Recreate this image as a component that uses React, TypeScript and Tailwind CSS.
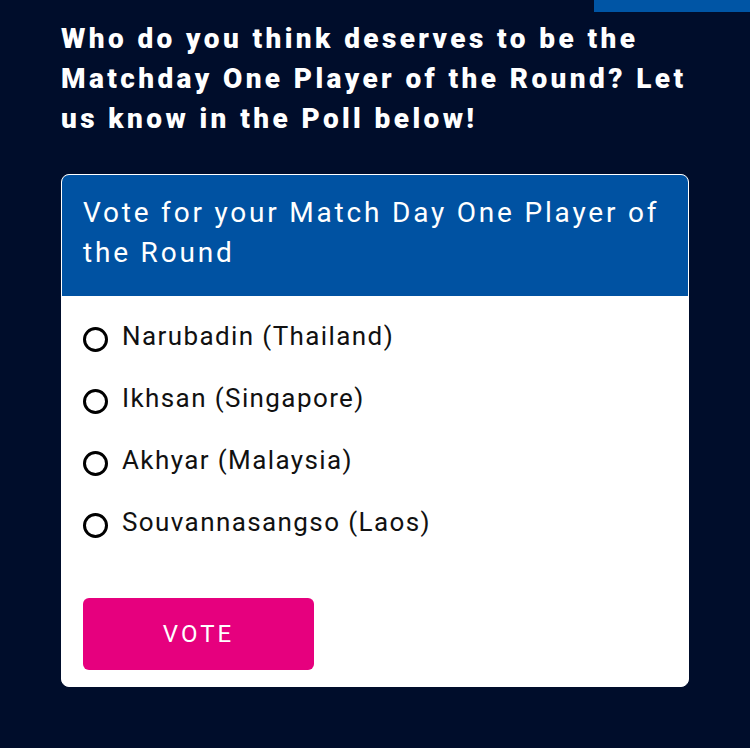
import { useState } from "react";

const options = [
  "Narubadin (Thailand)",
  "Ikhsan (Singapore)",
  "Akhyar (Malaysia)",
  "Souvannasangso (Laos)",
];

export default function App() {
  const [picked, setPicked] = useState<number | null>(null);

  return (
    <div className="min-h-[748px] w-[750px] bg-[#000d2b] font-['Roboto',sans-serif]">
      <div className="flex justify-end">
        <div className="h-3 w-[156px] bg-[#0055a5]" />
      </div>
      <div className="px-[61px] pt-[7px]">
        <h2 className="-mr-[30px] text-[28px] font-black leading-[40px] tracking-[3.4px] text-white">
          Who do you think deserves to be the Matchday One Player of the Round? Let us know in the Poll below!
        </h2>
        <div className="mt-[35px] overflow-hidden rounded-[8px] border-[1.5px] border-white bg-white">
          <div className="bg-[#0052a2] px-[21px] pb-[23px] pt-[18px] text-[28px] leading-[40px] tracking-[2.8px] text-white">
            Vote for your Match Day One Player of the Round
          </div>
          <div className="px-[21px] pb-[16px] pt-[20px]">
            <div className="flex flex-col gap-[22px]">
              {options.map((o, i) => (
                <label key={o} className="flex h-[40px] cursor-pointer items-center gap-[14px]" onClick={() => setPicked(i)}>
                  <span className="mt-[6px] flex h-[25px] w-[25px] items-center justify-center rounded-full border-[3px] border-black">
                    {picked === i && <span className="h-[11px] w-[11px] rounded-full bg-black" />}
                  </span>
                  <span className="text-[26px] tracking-[1.4px] text-[#111]">{o}</span>
                </label>
              ))}
            </div>
            <button className="mt-[56px] h-[72px] w-[231px] rounded-[6px] bg-[#e6007e] text-[24px] tracking-[3px] text-white">
              VOTE
            </button>
          </div>
        </div>
      </div>
    </div>
  );
}
